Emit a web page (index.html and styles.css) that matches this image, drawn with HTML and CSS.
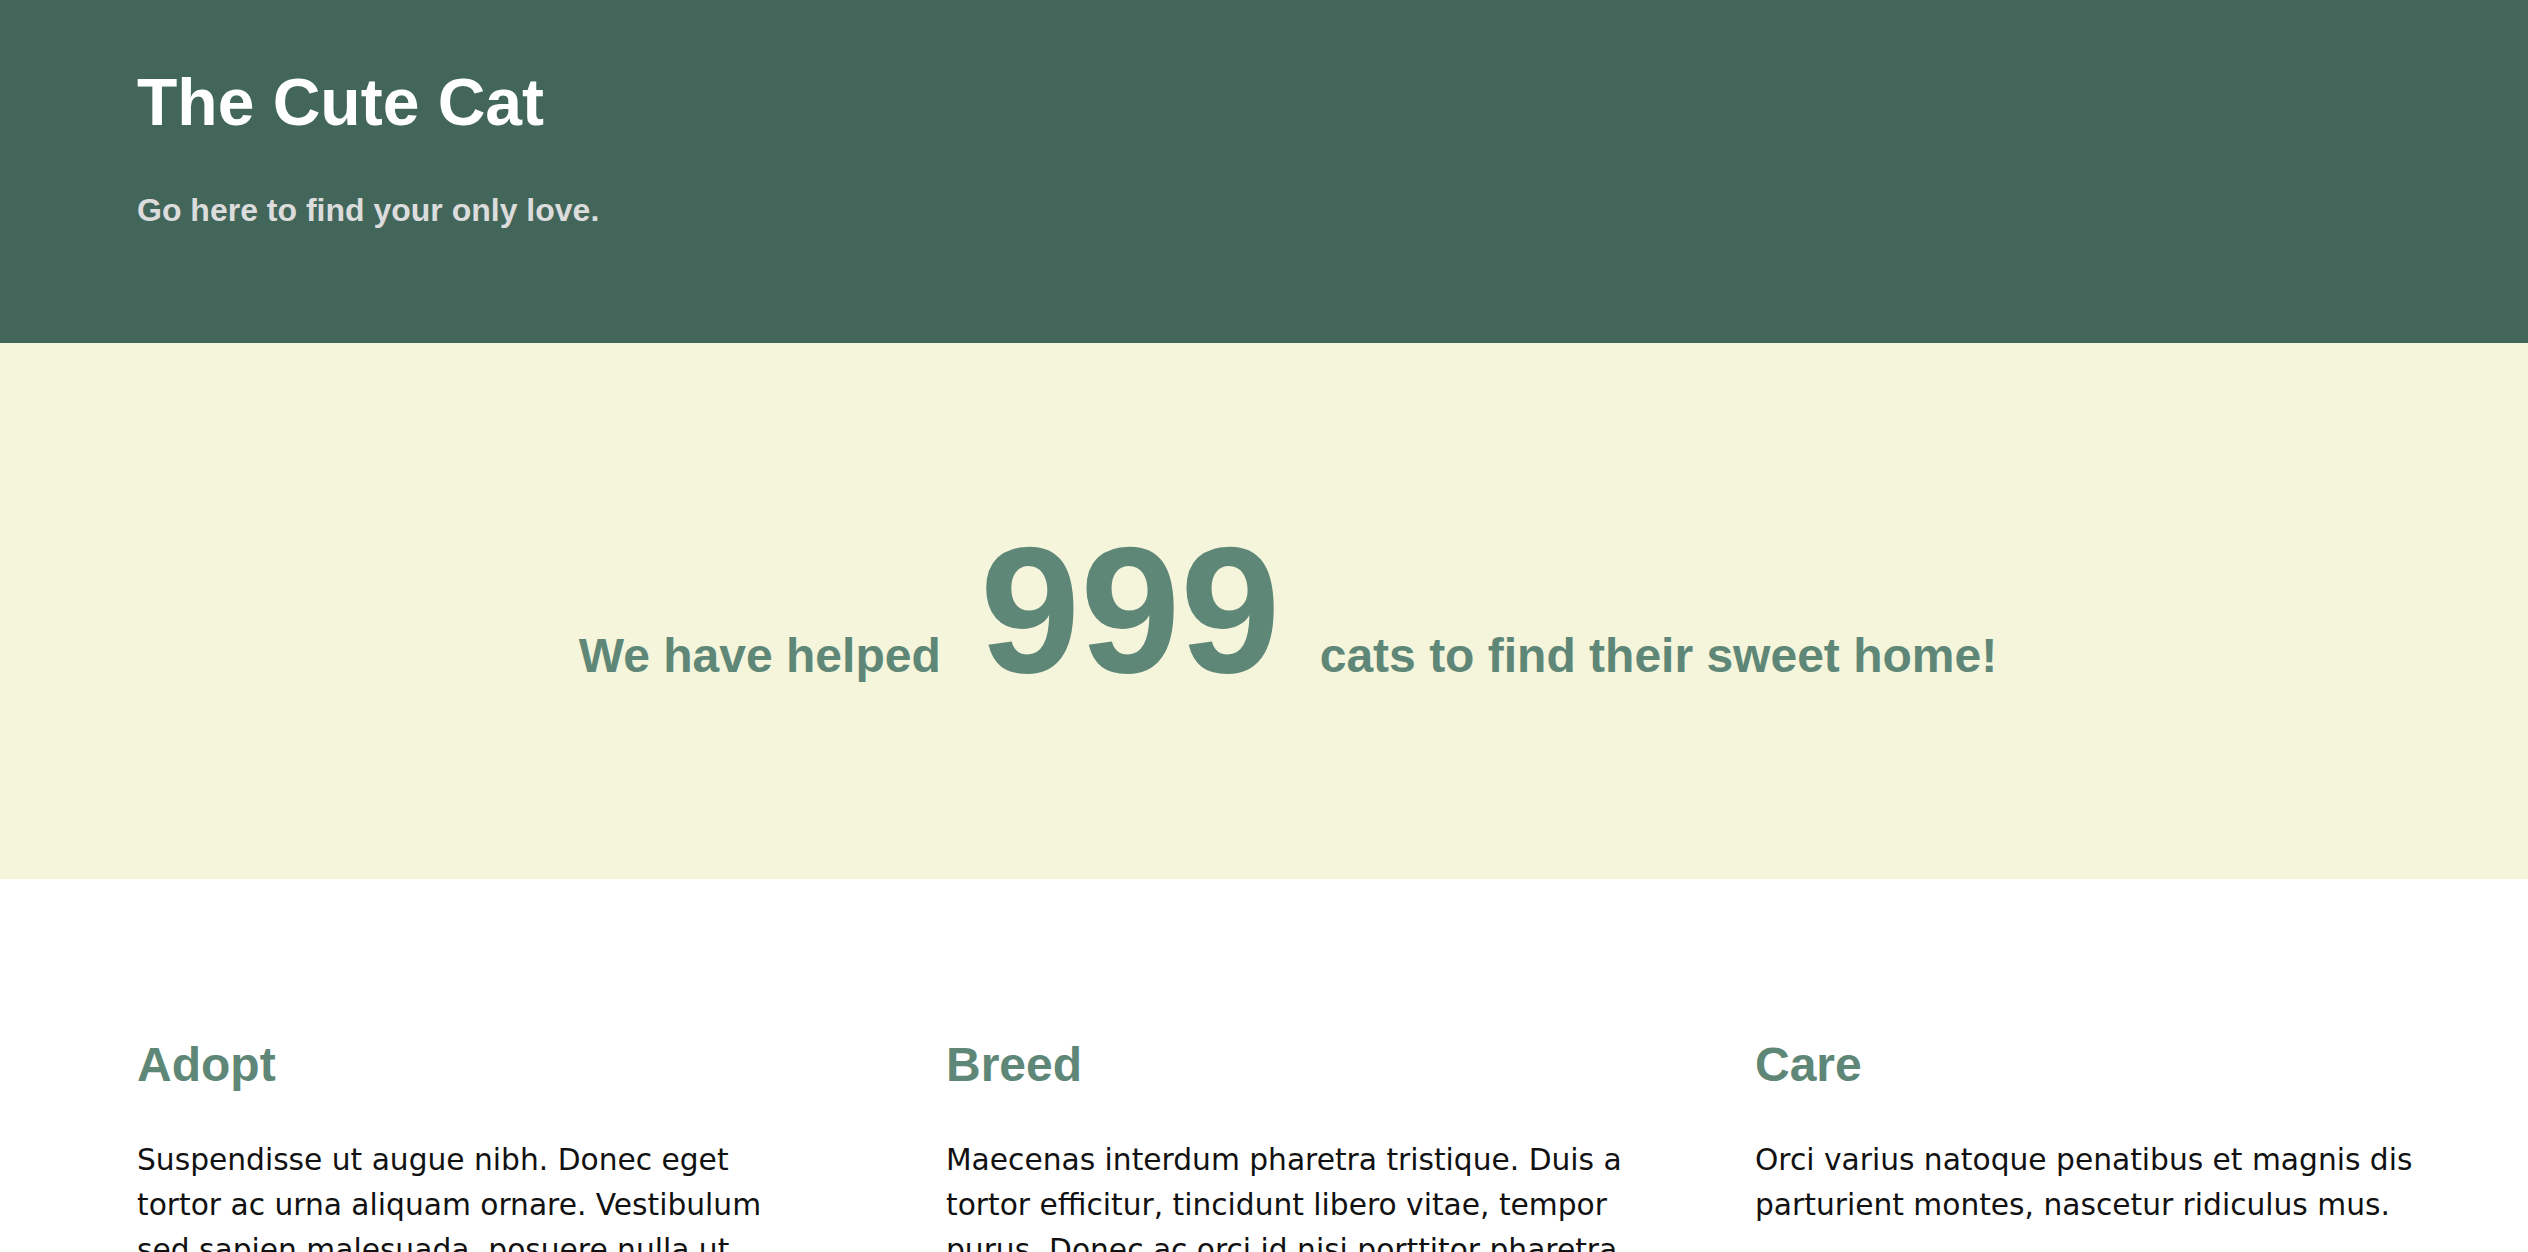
FILE: index.html
```html
<!DOCTYPE html>
<html lang="en">
<head>
<meta charset="utf-8">
<title>The Cute Cat</title>
<link rel="stylesheet" href="styles.css">
</head>
<body>
<header class="hero">
  <h1 class="hero-title">The Cute Cat</h1>
  <p class="hero-sub">Go here to find your only love.</p>
</header>
<section class="stats">
  <p class="stats-line">We have helped <span class="stats-num">999</span> cats to find their sweet home!</p>
</section>
<section class="features">
  <article class="feature">
    <h2 class="feature-title">Adopt</h2>
    <p class="feature-text">Suspendisse ut augue nibh. Donec eget tortor ac urna aliquam ornare. Vestibulum sed sapien malesuada, posuere nulla ut, fringilla lorem. Nam ac mi vel mauris ultrices tempus.</p>
  </article>
  <article class="feature">
    <h2 class="feature-title">Breed</h2>
    <p class="feature-text">Maecenas interdum pharetra tristique. Duis a tortor efficitur, tincidunt libero vitae, tempor purus. Donec ac orci id nisi porttitor pharetra vel sed lacus. Cras eu mauris et quam.</p>
  </article>
  <article class="feature">
    <h2 class="feature-title">Care</h2>
    <p class="feature-text">Orci varius natoque penatibus et magnis dis parturient montes, nascetur ridiculus mus.</p>
  </article>
</section>
</body>
</html>
```

FILE: styles.css
```css
html, body {
  margin: 0;
  padding: 0;
}

body {
  font-family: "Liberation Sans", Arial, sans-serif;
  background: #ffffff;
  color: #111111;
}

.hero {
  background: #42665a;
  padding: 64px 137px 114px;
}

.hero-title {
  margin: 0;
  font-size: 66px;
  font-weight: 700;
  line-height: normal;
  color: #ffffff;
}

.hero-sub {
  margin: 52px 0 0;
  font-size: 32px;
  font-weight: 700;
  line-height: normal;
  color: #dcdcdc;
}

.stats {
  background: #f5f5dc;
  padding: 163px 0 166px 48px;
}

.stats-line {
  margin: 0;
  text-align: center;
  font-size: 48px;
  font-weight: 700;
  line-height: normal;
  color: #5f8777;
}

.stats-num {
  font-size: 180px;
  margin: 0 26px;
}

.features {
  display: grid;
  grid-template-columns: repeat(3, 681px);
  column-gap: 128px;
  padding: 158px 0 80px 137px;
}

.feature-title {
  margin: 0;
  font-size: 48px;
  font-weight: 700;
  line-height: normal;
  color: #5f8777;
}

.feature-text {
  margin: 45px 0 0;
  font-family: "DejaVu Sans", "Liberation Sans", sans-serif;
  font-size: 29.7px;
  line-height: 45px;
  color: #111111;
}
```
